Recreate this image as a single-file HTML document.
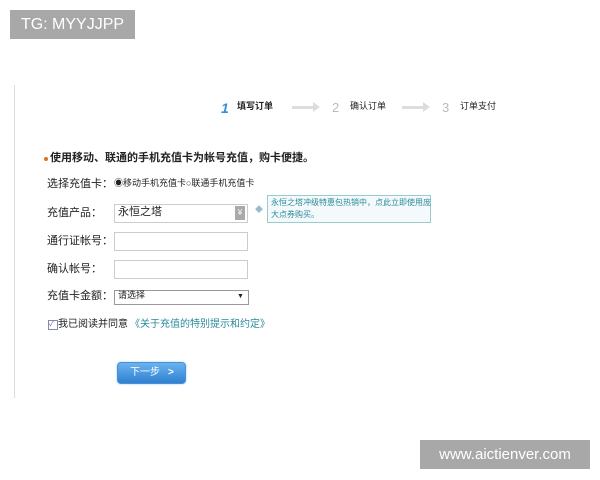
<!DOCTYPE html>
<html><head><meta charset="utf-8"><style>
body{margin:0;width:600px;height:480px;background:#fff;position:relative;overflow:hidden;font-family:"Liberation Sans","Noto Sans CJK SC",sans-serif;color:#222}
.a{position:absolute;white-space:nowrap;line-height:1.32}
.s{font-size:9px}
.f{font-size:11px}
.box{position:absolute;border:1px solid #ccc;background:#fff}
.arr{position:absolute;height:3px;background:#ddd}
.arr:after{content:"";position:absolute;right:-6px;top:-4px;border-left:7px solid #ddd;border-top:5px solid transparent;border-bottom:5px solid transparent}
</style></head><body>
<div class="a" style="left:10px;top:10px;width:125px;height:29px;background:#a8a8a8;color:#fff;font-size:16px;line-height:29px;text-align:center">TG: MYYJJPP</div>
<div class="a" style="left:14px;top:85px;width:1px;height:313px;background:#ddd"></div>

<div class="a" style="left:221px;top:99px;font-size:14px;font-weight:bold;font-style:italic;color:#3a8ed8">1</div>
<div class="a s" style="left:237px;top:101px;font-weight:bold">填写订单</div>
<div class="arr" style="left:292px;top:106px;width:22px"></div>
<div class="a" style="left:332px;top:99px;font-size:13px;color:#bbb">2</div>
<div class="a s" style="left:350px;top:101px">确认订单</div>
<div class="arr" style="left:402px;top:106px;width:22px"></div>
<div class="a" style="left:442px;top:99px;font-size:13px;color:#bbb">3</div>
<div class="a s" style="left:460px;top:101px">订单支付</div>

<div class="a" style="left:44px;top:157px;width:4px;height:4px;border-radius:2px;background:#e07020"></div>
<div class="a f" style="left:50px;top:151px;font-weight:bold">使用移动、联通的手机充值卡为帐号充值，购卡便捷。</div>

<div class="a f" style="left:47px;top:177px">选择充值卡：</div>
<div class="a s" style="left:114px;top:178px">◉移动手机充值卡○联通手机充值卡</div>

<div class="a f" style="left:47px;top:206px">充值产品：</div>
<div class="box" style="left:114px;top:204px;width:132px;height:17px"></div>
<div class="a f" style="left:118px;top:205px">永恒之塔</div>
<div class="a" style="left:235px;top:206px;width:10px;height:14px;background:#aaa;color:#fff;font-size:8px;text-align:center;line-height:14px">¥</div>
<div class="a" style="left:255px;top:205px;font-size:8px;color:#9bc">◆</div>
<div class="box" style="left:267px;top:195px;width:162px;height:26px;border-color:#9cc;background:#f4fafb"></div>
<div class="a" style="left:271px;top:197px;color:#2a8a9a;line-height:12px;font-size:8px">永恒之塔冲级特惠包热销中，点此立即使用庞<br>大点券购买。</div>

<div class="a f" style="left:47px;top:234px">通行证帐号：</div>
<div class="box" style="left:114px;top:232px;width:132px;height:17px"></div>
<div class="a f" style="left:47px;top:262px">确认帐号：</div>
<div class="box" style="left:114px;top:260px;width:132px;height:17px"></div>

<div class="a f" style="left:47px;top:289px">充值卡金额：</div>
<div class="box" style="left:114px;top:290px;width:133px;height:13px;border-color:#999"></div>
<div class="a s" style="left:118px;top:290px">请选择</div>
<div class="a" style="left:237px;top:292px;font-size:7px">▼</div>

<div class="a" style="left:48px;top:320px;width:8px;height:8px;border:1px solid #88a;font-size:7px;line-height:8px;color:#55a">✓</div>
<div class="a" style="left:58px;top:318px;font-size:10px">我已阅读并同意</div>
<div class="a" style="left:130px;top:318px;font-size:10px;color:#2a8a9a">《关于充值的特别提示和约定》</div>

<div class="a" style="left:117px;top:362px;width:67px;height:20px;border-radius:4px;background:linear-gradient(#6ab3ef,#2f80d0);border:1px solid #4a90d8;color:#fff;font-size:10px;line-height:20px;box-shadow:0 0 2px #9cf">
<span style="position:absolute;left:12px">下一步</span><span style="position:absolute;left:50px;font-weight:bold">&gt;</span></div>

<div class="a" style="left:420px;top:440px;width:170px;height:29px;background:#a8a8a8;color:#fff;font-size:15px;line-height:29px;text-align:center">www.aictienver.com</div>
</body></html>
